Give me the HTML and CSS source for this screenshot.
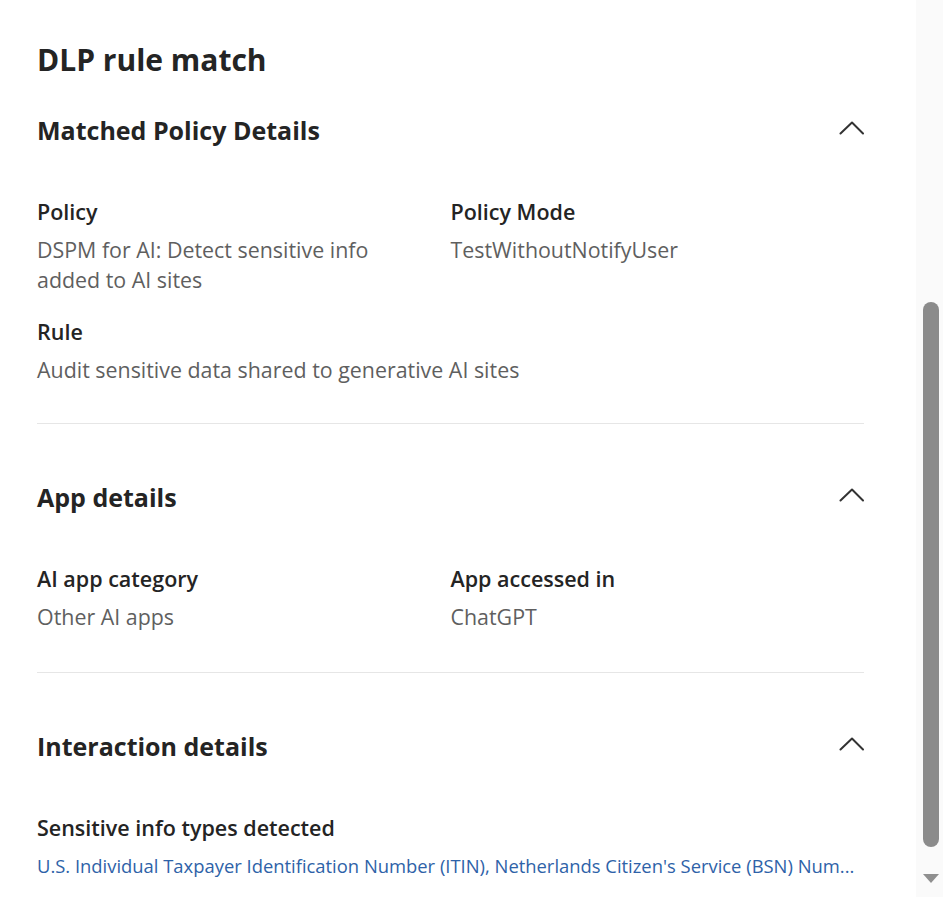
FILE: index.html
```html
<!DOCTYPE html>
<html lang="en">
<head>
    <meta charset="UTF-8">
    <meta name="viewport" content="width=device-width, initial-scale=1.0">
    <title>DLP rule match</title>
    <link rel="stylesheet" href="styles.css">
</head>
<body>
    <div class="page">
        <div class="panel">
            <h1 class="title">DLP rule match</h1>

            <section class="section">
                <div class="section-header">
                    <h2 class="section-title">Matched Policy Details</h2>
                    <svg class="chevron" width="26" height="14" viewBox="0 0 26 14"><path d="M2.5 12.5 L14 1.5 L25 12.5" fill="none" stroke="#333" stroke-width="2" stroke-linecap="round" stroke-linejoin="round"/></svg>
                </div>
                <div class="fields">
                    <div class="field">
                        <div class="field-label">Policy</div>
                        <div class="field-value">DSPM for AI: Detect sensitive info<br>added to AI sites</div>
                    </div>
                    <div class="field">
                        <div class="field-label">Policy Mode</div>
                        <div class="field-value">TestWithoutNotifyUser</div>
                    </div>
                    <div class="field wide">
                        <div class="field-label">Rule</div>
                        <div class="field-value">Audit sensitive data shared to generative AI sites</div>
                    </div>
                </div>
            </section>

            <section class="section app">
                <div class="section-header">
                    <h2 class="section-title">App details</h2>
                    <svg class="chevron" width="26" height="14" viewBox="0 0 26 14"><path d="M2.5 12.5 L14 1.5 L25 12.5" fill="none" stroke="#333" stroke-width="2" stroke-linecap="round" stroke-linejoin="round"/></svg>
                </div>
                <div class="fields">
                    <div class="field">
                        <div class="field-label">AI app category</div>
                        <div class="field-value">Other AI apps</div>
                    </div>
                    <div class="field">
                        <div class="field-label">App accessed in</div>
                        <div class="field-value">ChatGPT</div>
                    </div>
                </div>
            </section>

            <section class="section last">
                <div class="section-header">
                    <h2 class="section-title">Interaction details</h2>
                    <svg class="chevron" width="26" height="14" viewBox="0 0 26 14"><path d="M2.5 12.5 L14 1.5 L25 12.5" fill="none" stroke="#333" stroke-width="2" stroke-linecap="round" stroke-linejoin="round"/></svg>
                </div>
                <div class="fields">
                    <div class="field wide">
                        <div class="field-label">Sensitive info types detected</div>
                        <a class="field-link" href="#">U.S. Individual Taxpayer Identification Number (ITIN), Netherlands Citizen's Service (BSN) Num...</a>
                    </div>
                </div>
            </section>
        </div>

        <div class="scrollbar">
            <div class="scroll-thumb"></div>
            <div class="scroll-arrow"></div>
        </div>
    </div>
</body>
</html>
```

FILE: styles.css
```css
* {
    margin: 0;
    padding: 0;
    box-sizing: border-box;
}

body {
    background-color: #ffffff;
    color: #242424;
    font-family: 'Segoe UI', 'Open Sans', 'Noto Sans', sans-serif;
}

.page {
    display: flex;
    height: 100vh;
    overflow: hidden;
}

.panel {
    flex: 1;
    min-width: 0;
    padding: 42px 52px 0 37px;
}

.title {
    font-size: 30px;
    font-weight: 700;
    line-height: 36px;
    margin-bottom: 36px;
}

.section {
    padding-bottom: 38px;
    border-bottom: 1px solid #e6e6e6;
    margin-bottom: 57px;
}

.section.app {
    padding-bottom: 40px;
}

.section.last {
    border-bottom: none;
}

.section-header {
    display: flex;
    justify-content: space-between;
    align-items: center;
    height: 32px;
}

.section-title {
    font-size: 25px;
    font-weight: 700;
    line-height: 32px;
}

.chevron {
    display: block;
    margin-top: -4px;
}

.fields {
    display: grid;
    grid-template-columns: 1fr 1fr;
    row-gap: 23px;
    margin-top: 52px;
}

.field {
    min-width: 0;
}

.field.wide {
    grid-column: 1 / -1;
}

.field-label {
    font-size: 21.5px;
    font-weight: 600;
    line-height: 28px;
    color: #242424;
}

.field-value {
    margin-top: 9px;
    font-size: 21.4px;
    line-height: 30px;
    color: #5f5f5f;
}

.field-link {
    display: block;
    margin-top: 11px;
    font-size: 18.4px;
    line-height: 26px;
    color: #2e62a8;
    text-decoration: none;
    white-space: nowrap;
}

.scrollbar {
    width: 27px;
    background-color: #fafafa;
    display: flex;
    flex-direction: column;
    align-items: center;
    padding-top: 302px;
}

.scroll-thumb {
    width: 16px;
    height: 545px;
    border-radius: 8px;
    background-color: #8b8b8b;
    margin-left: 2px;
}

.scroll-arrow {
    margin-top: 27px;
    margin-left: 2px;
    width: 0;
    height: 0;
    border-left: 8px solid transparent;
    border-right: 8px solid transparent;
    border-top: 9px solid #8f8f8f;
}
```
